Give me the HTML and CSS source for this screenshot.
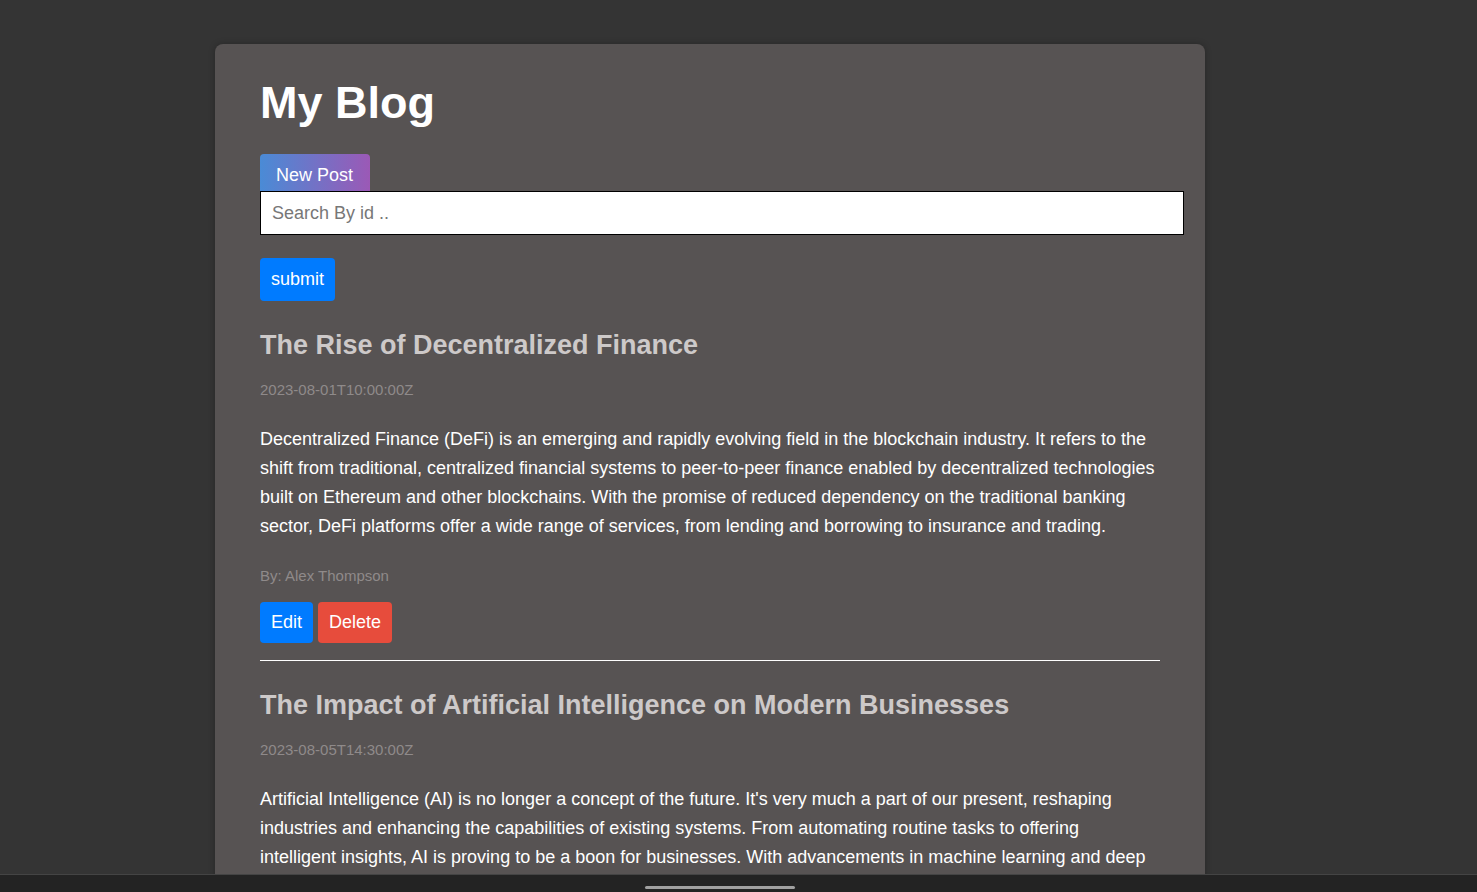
FILE: index.html
```html
<!DOCTYPE html>
<html lang="en">
<head>
<meta charset="utf-8">
<title>My Blog</title>
<link rel="stylesheet" href="styles.css">
</head>
<body>
<div class="page">
  <main class="container">
    <h1 class="title">My Blog</h1>
    <button class="new-post">New Post</button>
    <form class="search">
      <input class="search-input" type="text" placeholder="Search By id ..">
      <button class="submit" type="button">submit</button>
    </form>
    <article class="post">
      <h2 class="post-title">The Rise of Decentralized Finance</h2>
      <p class="post-date">2023-08-01T10:00:00Z</p>
      <p class="post-body">Decentralized Finance (DeFi) is an emerging and rapidly evolving field in the blockchain industry. It refers to the shift from traditional, centralized financial systems to peer-to-peer finance enabled by decentralized technologies built on Ethereum and other blockchains. With the promise of reduced dependency on the traditional banking sector, DeFi platforms offer a wide range of services, from lending and borrowing to insurance and trading.</p>
      <p class="post-author">By: Alex Thompson</p>
      <div class="actions">
        <button class="btn btn-edit">Edit</button>
        <button class="btn btn-delete">Delete</button>
      </div>
      <hr class="divider">
    </article>
    <article class="post">
      <h2 class="post-title">The Impact of Artificial Intelligence on Modern Businesses</h2>
      <p class="post-date">2023-08-05T14:30:00Z</p>
      <p class="post-body">Artificial Intelligence (AI) is no longer a concept of the future. It's very much a part of our present, reshaping industries and enhancing the capabilities of existing systems. From automating routine tasks to offering intelligent insights, AI is proving to be a boon for businesses. With advancements in machine learning and deep learning, businesses can now harness data in ways that were previously unimaginable.</p>
    </article>
  </main>
</div>
<div class="bottom-bar"><span class="handle"></span></div>
</body>
</html>
```

FILE: styles.css
```css
html, body {
  margin: 0;
  padding: 0;
  background: #343434;
  font-family: "Liberation Sans", Arial, sans-serif;
  height: 100%;
  overflow: hidden;
}

.page {
  display: flex;
  justify-content: flex-start;
  padding: 44px 0 0 215px;
}

.container {
  width: 900px;
  background: #575353;
  border-radius: 8px 8px 0 0;
  padding: 33px 45px 40px 45px;
  box-shadow: 0 0 6px rgba(0, 0, 0, 0.25);
  min-height: 900px;
}

.title {
  margin: 0 0 25px 0;
  font-size: 45px;
  font-weight: bold;
  color: #ffffff;
  line-height: 52px;
}

.new-post {
  display: block;
  border: none;
  margin: 0;
  padding: 11px 17px 5px 16px;
  height: 37px;
  line-height: 21px;
  font-family: inherit;
  font-size: 18px;
  color: #ffffff;
  background: linear-gradient(to right, #4a8bd6, #9b59b6);
  border-radius: 4px 4px 0 0;
}

.search {
  display: flex;
  flex-direction: column;
  align-items: flex-start;
  margin: 0;
}

.search-input {
  box-sizing: border-box;
  width: 924px;
  height: 44px;
  margin: 0;
  padding: 10px 11px;
  border: 1px solid #000000;
  background: #ffffff;
  font-family: inherit;
  font-size: 18px;
  color: #333;
  outline: none;
}

.search-input::placeholder {
  color: #777777;
}

.submit {
  margin-top: 23px;
  border: none;
  padding: 0 11px;
  height: 43px;
  font-family: inherit;
  font-size: 18px;
  color: #ffffff;
  background: #007bff;
  border-radius: 4px;
}

.post {
  margin-top: 28px;
}

.post-title {
  margin: 0;
  font-size: 27px;
  line-height: 32px;
  font-weight: bold;
  color: #cdc9c9;
}

.post-date {
  margin: 20px 0 0 0;
  font-size: 15px;
  line-height: 17px;
  color: #8f8a8a;
}

.post-body {
  margin: 27px 0 0 0;
  font-size: 18px;
  line-height: 29px;
  color: #ffffff;
}

.post-author {
  margin: 26px 0 0 0;
  font-size: 15px;
  line-height: 17px;
  color: #8f8a8a;
}

.actions {
  display: flex;
  gap: 5px;
  margin-top: 18px;
}

.btn {
  border: none;
  margin: 0;
  padding: 0 11px;
  height: 41px;
  font-family: inherit;
  font-size: 18px;
  color: #ffffff;
  border-radius: 4px;
}

.btn-edit {
  background: #007bff;
}

.btn-delete {
  background: #e74c3c;
}

.divider {
  margin: 17px 0 0 0;
  border: none;
  border-top: 1px solid #ffffff;
  height: 0;
}

.bottom-bar {
  position: fixed;
  left: 0;
  right: 0;
  bottom: 0;
  height: 17px;
  background: #232323;
  border-top: 1px solid #444444;
  display: flex;
  justify-content: flex-start;
  padding-left: 645px;
}

.handle {
  margin-top: 11px;
  width: 150px;
  height: 3px;
  border-radius: 2px;
  background: #a0a0a0;
}
```
